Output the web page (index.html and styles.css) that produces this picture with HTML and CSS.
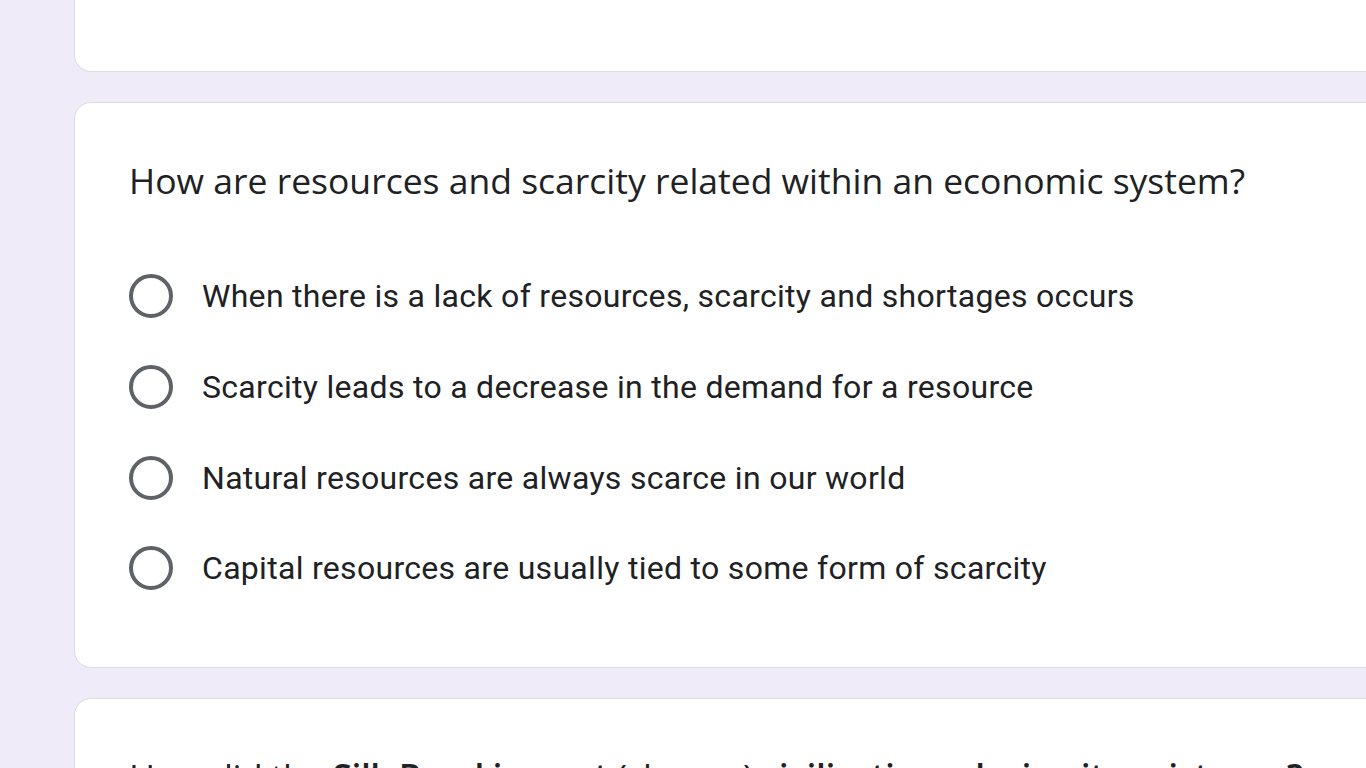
FILE: index.html
```html
<!DOCTYPE html>
<html>
<head>
<meta charset="utf-8">
<link rel="stylesheet" href="styles.css">
</head>
<body>
<div class="page">
  <div class="card card-top"></div>
  <div class="card card-question">
    <div class="q-title">How are resources and scarcity related within an economic system?</div>
    <div class="options">
      <div class="option"><span class="radio"></span><span class="opt-text">When there is a lack of resources, scarcity and shortages occurs</span></div>
      <div class="option"><span class="radio"></span><span class="opt-text">Scarcity leads to a decrease in the demand for a resource</span></div>
      <div class="option"><span class="radio"></span><span class="opt-text">Natural resources are always scarce in our world</span></div>
      <div class="option"><span class="radio"></span><span class="opt-text">Capital resources are usually tied to some form of scarcity</span></div>
    </div>
  </div>
  <div class="card card-next">
    <div class="q-title next-title">How did the <b>Silk Road impact</b> (change) <b>civilizations during its existence?</b></div>
  </div>
</div>
</body>
</html>
```
FILE: styles.css
```css
html, body {
  margin: 0;
  padding: 0;
  height: 768px;
  overflow: hidden;
  background: #f0ebf8;
}
.page {
  display: flex;
  flex-direction: column;
  gap: 30px;
  padding-left: 74px;
}
.card {
  background: #fff;
  border: 1px solid #dadce0;
  border-radius: 17px;
  width: 1400px;
  box-sizing: border-box;
}
.card-top {
  height: 72px;
  border-top: none;
  border-radius: 0 0 17px 17px;
}
.card-question {
  height: 566px;
  padding: 53px 0 0 54px;
}
.q-title {
  font-family: "Open Sans", sans-serif;
  font-size: 35.5px;
  line-height: 48px;
  color: #202124;
  white-space: nowrap;
}
.options {
  margin-top: 47px;
  display: flex;
  flex-direction: column;
}
.option {
  height: 90.7px;
  display: flex;
  align-items: center;
}
.radio {
  width: 44px;
  height: 44px;
  box-sizing: border-box;
  border: 4.3px solid #5f6368;
  border-radius: 50%;
  flex: none;
}
.opt-text {
  margin-left: 29px;
  font-family: Roboto, sans-serif;
  font-size: 32px;
  letter-spacing: 0.3px;
  color: #202124;
}
.card-next {
  height: 200px;
  padding: 53px 0 0 54px;
}
.next-title {
  letter-spacing: -0.5px;
}
.next-title b {
  font-weight: 600;
}
```
